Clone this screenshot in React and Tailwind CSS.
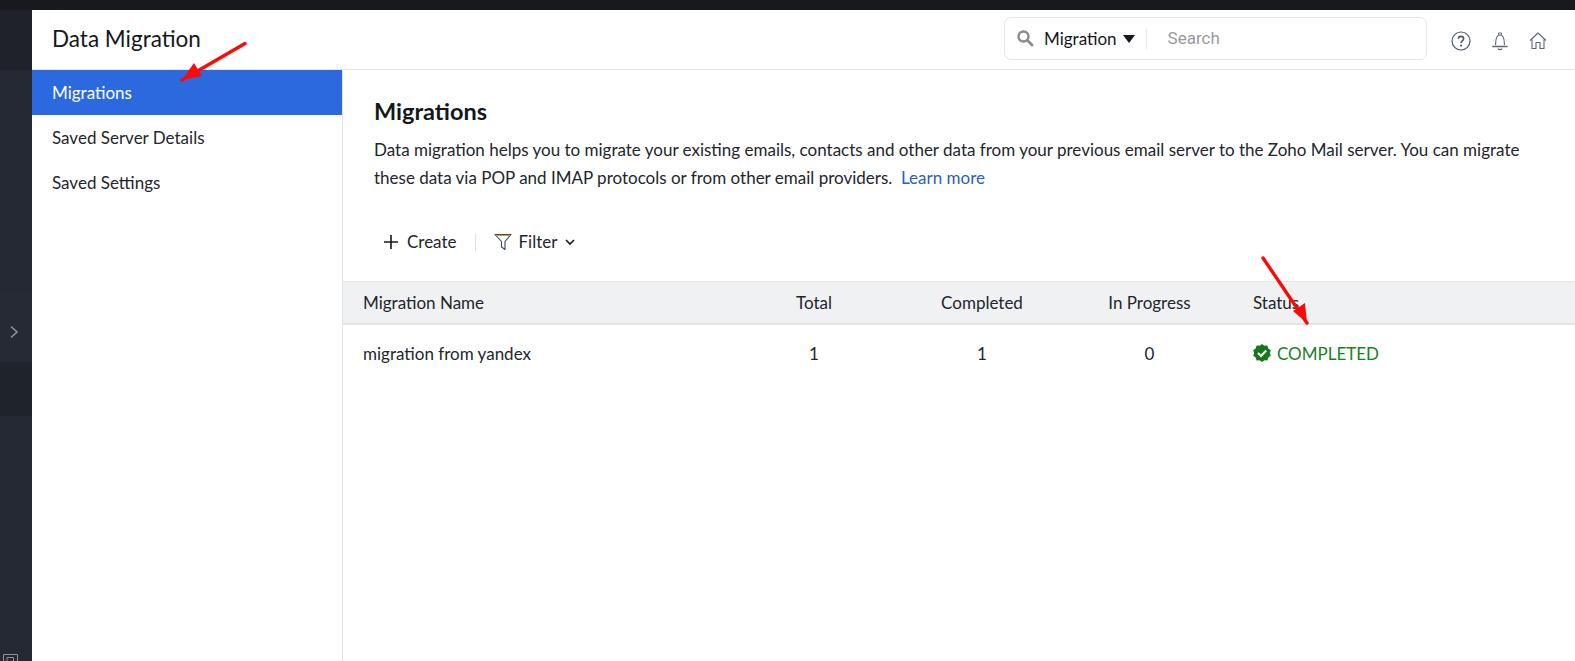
import React from "react";

const font = { };

function Arrow({ className, x1, y1, x2, y2, hx1, hy1, hx2, hy2, w, h }) {
  return (
    <svg className={className} width={w} height={h} viewBox={`0 0 ${w} ${h}`} fill="none">
      <line x1={x1} y1={y1} x2={x2} y2={y2} stroke="#fb0a0a" strokeWidth="3.4" strokeLinecap="round" />
      <polygon points={`${x2},${y2} ${hx1},${hy1} ${hx2},${hy2}`} fill="#fb0a0a" />
    </svg>
  );
}

function Rail() {
  return (
    <div className="w-8 shrink-0 flex flex-col bg-[#252934]">
      <div className="h-[60px] bg-[#1f222b]" />
      <div className="h-[222px] bg-[#252934]" />
      <div className="h-[70px] flex items-center justify-center bg-[#262a35]">
        <svg width="10" height="14" viewBox="0 0 10 14" fill="none" className="mt-[10px] ml-[-4px]">
          <path d="M2 1.5 L8 7 L2 12.5" stroke="#8f929b" strokeWidth="1.6" />
        </svg>
      </div>
      <div className="h-[54px] bg-[#1f232c]" />
      <div className="flex-1 flex flex-col justify-end items-start pl-[3px]">
        <svg width="15" height="7" viewBox="0 0 15 7" fill="none">
          <path d="M0.5 7 V0.5 H14.5 V7 M4 7 V3.5 H10.5 V7" stroke="#8f929b" strokeWidth="1" />
        </svg>
      </div>
    </div>
  );
}

function Header() {
  return (
    <div className="h-[60px] shrink-0 flex items-center border-b border-[#e3e4e6] bg-white relative">
      <div className="w-[310px] pl-5 text-[22.5px] text-[#14171c] leading-none pb-[1px]">Data Migration</div>
      <div className="ml-auto flex items-center">
        <div className="w-[423px] h-[43px] mb-[2px] rounded-[7px] border border-[#e4e5e7] flex items-center pl-[11px]">
          <svg width="18" height="18" viewBox="0 0 18 18" fill="none" className="mt-[-2px]">
            <circle cx="7.5" cy="7.5" r="5" stroke="#8b8b8b" strokeWidth="2.4" />
            <path d="M11.3 11.3 L16 16" stroke="#8b8b8b" strokeWidth="2.8" strokeLinecap="round" />
          </svg>
          <span className="ml-[10px] text-[17px] text-[#14171c]">Migration</span>
          <svg width="12" height="8" viewBox="0 0 12 8" className="ml-[6px]">
            <polygon points="0,0 12,0 6,8" fill="#14171c" />
          </svg>
          <div className="ml-[11px] w-px h-[20px] bg-[#e4e5e7]" />
          <span className="ml-[21px] text-[17px] text-[#9a9a9e] font-['Roboto',sans-serif]">Search</span>
        </div>
        <div className="w-[148px] flex items-center pl-[24px] gap-[21px]">
          <svg width="20" height="20" viewBox="0 0 20 20" fill="none" className="mt-[2px]">
            <circle cx="10" cy="10" r="9" stroke="#4e5a6b" strokeWidth="1.2" />
            <path d="M7.4 7.8 C7.4 4.6 12.6 4.6 12.6 7.8 C12.6 10 10 9.8 10 12" stroke="#4e5a6b" strokeWidth="1.6" fill="none" />
            <circle cx="10" cy="14.6" r="1.1" fill="#4e5a6b" />
          </svg>
          <svg width="16" height="19" viewBox="0 0 16 19" fill="none" className="mt-[4px]">
            <path d="M6.5 2.8 V1 H9.5 V2.8" stroke="#5d6673" strokeWidth="1" />
            <path d="M3.5 13 C4 10 3 3 8 3 C13 3 12 10 12.5 13" stroke="#5d6673" strokeWidth="1.1" />
            <path d="M1 14.5 H15" stroke="#5d6673" strokeWidth="1.6" strokeLinecap="round" />
            <path d="M6 16.5 C6.5 18 9.5 18 10 16.5" stroke="#5d6673" strokeWidth="1.1" />
          </svg>
          <svg width="18" height="18" viewBox="0 0 18 18" fill="none" className="mt-[2px]">
            <path d="M1 8.5 L9 1 L17 8.5 M3 7.5 V16.5 H7 V10.5 H11 V16.5 H15 V7.5" stroke="#5d6673" strokeWidth="1.1" strokeLinejoin="round" />
          </svg>
        </div>
      </div>
    </div>
  );
}

function Side() {
  return (
    <div className="w-[311px] shrink-0 border-r border-[#e3e4e6] bg-white text-[17px] text-[#22262c]">
      <div className="h-[45px] flex items-center pl-5 bg-[#2c68de] text-white">Migrations</div>
      <div className="h-[45px] flex items-center pl-5">Saved Server Details</div>
      <div className="h-[45px] flex items-center pl-5">Saved Settings</div>
    </div>
  );
}

function Main() {
  return (
    <div className="flex-1 min-w-0 overflow-hidden bg-white text-[#22262c]">
      <div className="pl-[31px] pt-[27px] whitespace-nowrap">
        <h1 className="text-[23.5px] font-bold leading-[28px] text-[#14171c]">Migrations</h1>
        <p className="mt-[11px] text-[17px] leading-[28px]">
          Data migration helps you to migrate your existing emails, contacts and other data from your previous email server to the Zoho Mail server. You can migrate
          <br />
          these data via POP and IMAP protocols or from other email providers.&nbsp; <span className="text-[#2b5fb8]">Learn more</span>
        </p>
      </div>
      <div className="h-[28px] mt-[36px] ml-[41px] flex items-center text-[17px]">
        <svg width="14" height="14" viewBox="0 0 14 14" className="mr-[9px]">
          <path d="M7 0 V14 M0 7 H14" stroke="#14171c" strokeWidth="1.6" />
        </svg>
        <span>Create</span>
        <div className="ml-[18px] w-px h-[17px] bg-[#e4dfdf]" />
        <svg width="18" height="18" viewBox="0 0 18 18" fill="none" className="ml-[18px]">
          <path d="M1 1.5 H17 L11 8.5 V16.5 L7.5 14 V8.5 Z" stroke="#3d4756" strokeWidth="1.1" strokeLinejoin="round" />
          <path d="M2.5 2.5 H15.5" stroke="#d9a02b" strokeWidth="1" />
        </svg>
        <span className="ml-[7px]">Filter</span>
        <svg width="10" height="7" viewBox="0 0 10 7" fill="none" className="ml-[8px]">
          <path d="M1 1 L5 5 L9 1" stroke="#14171c" strokeWidth="1.6" />
        </svg>
      </div>
      <div className="mt-[25px] h-[44px] grid grid-cols-[387px_168px_168px_167px_1fr] items-center bg-[#f0f1f3] border-t border-b-2 border-t-[#e3e4e6] border-b-[#e3e4e6] text-[17px]">
        <div className="pl-5">Migration Name</div>
        <div className="text-center">Total</div>
        <div className="text-center">Completed</div>
        <div className="text-center">In Progress</div>
        <div className="pl-5">Status</div>
      </div>
      <div className="h-[58px] grid grid-cols-[387px_168px_168px_167px_1fr] items-center text-[17px]">
        <div className="pl-5">migration from yandex</div>
        <div className="text-center">1</div>
        <div className="text-center">1</div>
        <div className="text-center">0</div>
        <div className="pl-5 flex items-center text-[#1d7f1d]">
          <svg width="18" height="18" viewBox="0 0 18 18" className="mr-[6px] mt-[-3px]">
            <polygon fill="#17761c" points="9,0 11.4,1.8 14.4,1.6 15.3,4.5 17.8,6.2 16.8,9 17.8,11.8 15.3,13.5 14.4,16.4 11.4,16.2 9,18 6.6,16.2 3.6,16.4 2.7,13.5 0.2,11.8 1.2,9 0.2,6.2 2.7,4.5 3.6,1.6 6.6,1.8" />
            <path d="M5 9 L8 12 L13.2 6.6" stroke="#fff" strokeWidth="2.2" fill="none" />
          </svg>
          COMPLETED
        </div>
      </div>
    </div>
  );
}

export default function App() {
  return (
    <div className="relative w-[1575px] h-[661px] overflow-hidden flex flex-col bg-white font-['Lato',sans-serif]">
      <div className="h-[10px] shrink-0 bg-[#18191c]" />
      <div className="flex-1 flex min-h-0">
        <Rail />
        <div className="flex-1 flex flex-col min-w-0">
          <Header />
          <div className="flex-1 flex min-h-0">
            <Side />
            <Main />
          </div>
        </div>
      </div>
      <Arrow className="absolute left-[180px] top-[40px]" w={70} h={42} x1={65} y1={3.5} x2={2} y2={40} hx1={14} hy1={23} hx2={22} hy2={36} />
      <Arrow className="absolute left-[1258px] top-[253px]" w={52} h={72} x1={5} y1={5} x2={49} y2={70} hx1={35} hy1={58} hx2={47} hy2={50} />
    </div>
  );
}
